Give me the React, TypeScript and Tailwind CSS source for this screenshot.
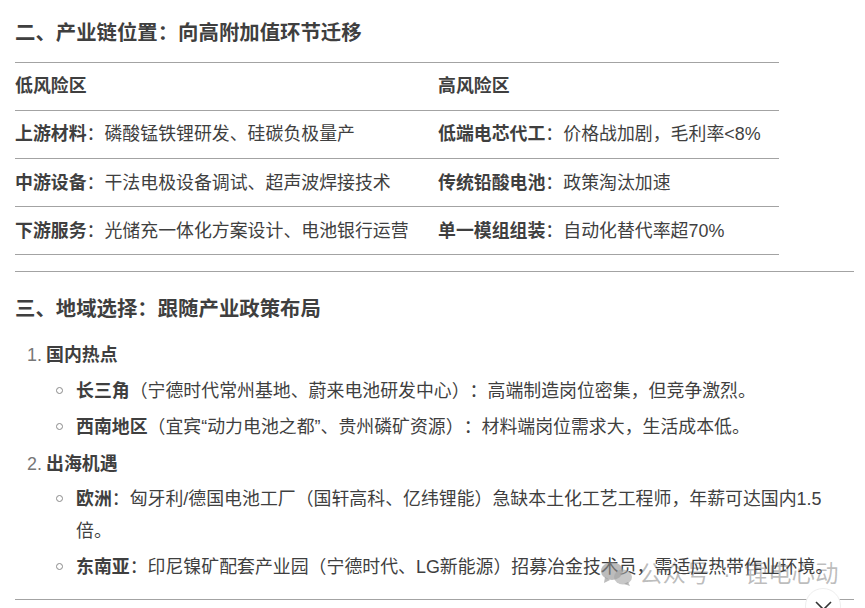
import React from "react";

const font = { fontFamily: '"Liberation Sans","Noto Sans CJK SC",sans-serif' };

const rows = [
  ["上游材料", "：磷酸锰铁锂研发、硅碳负极量产", "低端电芯代工", "：价格战加剧，毛利率<8%"],
  ["中游设备", "：干法电极设备调试、超声波焊接技术", "传统铅酸电池", "：政策淘汰加速"],
  ["下游服务", "：光储充一体化方案设计、电池银行运营", "单一模组组装", "：自动化替代率超70%"],
];

function Sub({ b, t }: { b: string; t: string }) {
  return (
    <li className="flex mt-1 leading-8">
      <span className="w-[7px] h-[7px] rounded-full border border-[#8a8a8a] mt-[12px] ml-[29px] mr-[13px] shrink-0" />
      <span><b className="font-bold">{b}</b>{t}</span>
    </li>
  );
}

export default function App() {
  return (
    <div className="relative w-[865px] h-[608px] overflow-hidden bg-white text-[#3f3f3f] text-[17.9px] pl-[15px] [text-spacing-trim:space-all]" style={font}>
      <h2 className="text-[20.4px] font-bold leading-[30px] pt-[18px] pb-[14px]">二、产业链位置：向高附加值环节迁移</h2>
      <table className="w-[764px] border-collapse table-fixed">
        <thead>
          <tr className="border-y border-[#a3a3a3] h-[48px]">
            <th className="w-[423px] p-0 text-left font-bold">低风险区</th>
            <th className="p-0 text-left font-bold">高风险区</th>
          </tr>
        </thead>
        <tbody>
          {rows.map((r, i) => (
            <tr key={r[0]} className="border-b border-[#a3a3a3] h-[48px]">
              <td className={i > 0 ? "p-0 pt-[2px]" : "p-0"}><b className="font-bold">{r[0]}</b>{r[1]}</td>
              <td className={i > 0 ? "p-0 pt-[2px]" : "p-0"}><b className="font-bold">{r[2]}</b>{r[3]}</td>
            </tr>
          ))}
        </tbody>
      </table>
      <hr className="w-[839px] mt-[16px] border-t border-[#a3a3a3]" />
      <h2 className="text-[20.4px] font-bold leading-[30px] pt-[22px] pb-[15px]">三、地域选择：跟随产业政策布局</h2>
      <div className="pl-[12px] pr-[26px] leading-8">
        <div className="flex"><span className="w-[19px] text-[#777]">1.</span><b className="font-bold">国内热点</b></div>
        <ul>
          <Sub b="长三角" t="（宁德时代常州基地、蔚来电池研发中心）：高端制造岗位密集，但竞争激烈。" />
          <Sub b="西南地区" t="（宜宾“动力电池之都”、贵州磷矿资源）：材料端岗位需求大，生活成本低。" />
        </ul>
        <div className="flex mt-[5px]"><span className="w-[19px] text-[#777]">2.</span><b className="font-bold">出海机遇</b></div>
        <ul className="-mt-px">
          <Sub b="欧洲" t="：匈牙利/德国电池工厂（国轩高科、亿纬锂能）急缺本土化工艺工程师，年薪可达国内1.5倍。" />
          <Sub b="东南亚" t="：印尼镍矿配套产业园（宁德时代、LG新能源）招募冶金技术员，需适应热带作业环境。" />
        </ul>
      </div>
      <hr className="absolute left-[15px] top-[599px] w-[839px] border-t border-[#a3a3a3]" />
      <div className="absolute left-[600px] top-[559px] flex items-center gap-[3px] text-[#3f3f3f]/35 text-[23.5px] leading-[30px] whitespace-nowrap">
        <svg width="36" height="28" viewBox="0 0 36 28" fill="#8f8f8f" fillOpacity="0.6">
          <ellipse cx="12" cy="11" rx="11" ry="9" />
          <path d="M5 17l-1 6 6-3z" />
          <ellipse cx="23" cy="17" rx="9" ry="7.5" fill="#a3a3a3" />
          <path d="M28 22l2 4-6-2z" />
        </svg>
        <span>公众号<span className="px-[7px]"> · </span>锂电心动</span>
      </div>
      <div className="absolute left-[805px] top-[588px] w-[36px] h-[36px] rounded-full bg-white border border-[#eeeeee] flex items-start justify-center pt-[12px]">
        <svg width="17" height="10" viewBox="0 0 17 10" fill="none" stroke="#333" strokeWidth="1.6"><path d="M1 1l7.5 7.5L16 1" /></svg>
      </div>
    </div>
  );
}
